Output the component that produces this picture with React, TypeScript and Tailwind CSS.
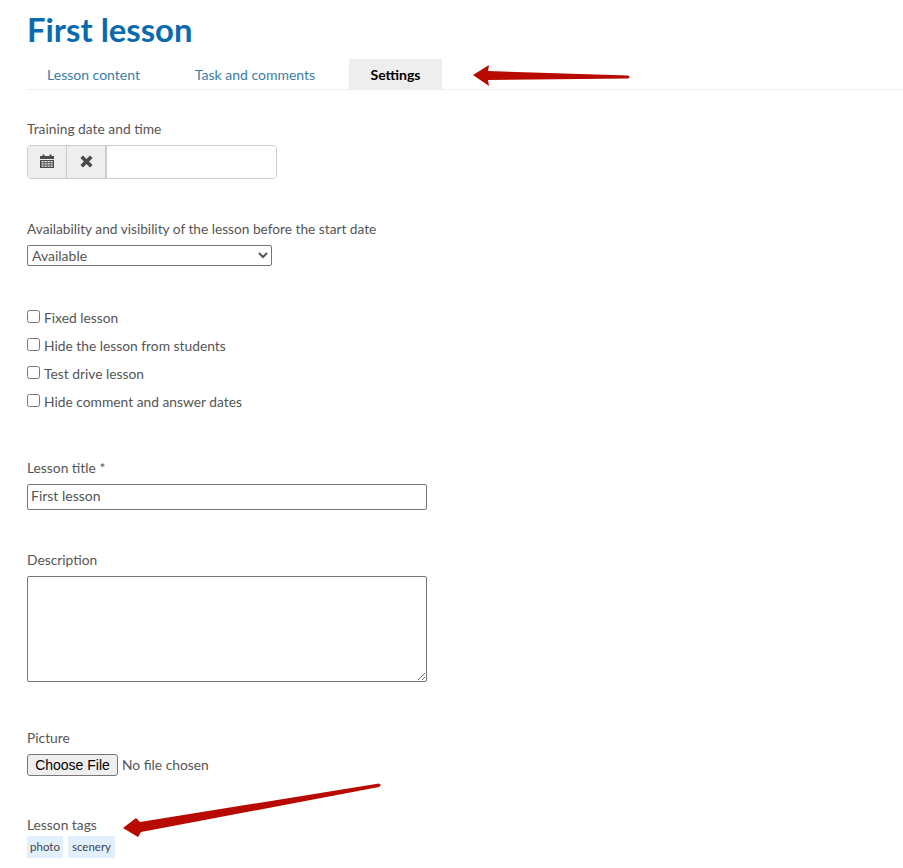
const checks = ["Fixed lesson", "Hide the lesson from students", "Test drive lesson", "Hide comment and answer dates"];

function Arrow({ className, viewBox, d }: { className: string; viewBox: string; d: string }) {
  return (
    <svg className={className} viewBox={viewBox} aria-hidden="true">
      <path d={d} fill="#b80a00" />
    </svg>
  );
}

export default function App() {
  return (
    <div className="relative h-[868px] overflow-hidden bg-white pl-[27px] font-['Lato',sans-serif] text-[13.8px] text-[#555]">
      <h1 className="pt-[10px] text-[32.8px] font-bold leading-[40px] text-[#0a6ab0]">First lesson</h1>

      {/* tabs */}
      <div className="mt-[9px] flex h-[31px] gap-[14px] border-b border-[#eeeeee] text-[14px]">
        <div className="flex h-[30px] w-[133px] items-center justify-center text-[#3a7ca8]">Lesson content</div>
        <div className="ml-px flex h-[30px] w-[160px] items-center justify-center text-[#3a7ca8]">Task and comments</div>
        <div className="flex h-[30px] w-[93px] items-center justify-center bg-[#eeeeee] font-bold text-black">Settings</div>
      </div>

      <label className="mt-[29px] block h-[20px] leading-[20px]">Training date and time</label>
      <div className="mt-[6px] flex h-[34px] w-[250px] overflow-hidden rounded-[4px] border border-[#cccccc]">
        <div className="flex w-[39px] items-center justify-center border-r border-[#cccccc] bg-[#eeeeee] pb-[2px]">
          <svg width="14" height="14" viewBox="0 0 14 14" aria-hidden="true">
            <path d="M0 2h2.5V.5h2V2h5V.5h2V2H14v3H0z" fill="#4a4a4a" />
            <path fillRule="evenodd" d="M0 6h14v8H0zm1.5 1v1.2h2.2V7zm3 0v1.2h2.2V7zm3 0v1.2h2.2V7zm3 0v1.2h2.2V7zm-9 2.3v1.2h2.2V9.300zm3 0v1.2h2.200V9.300zm3 0v1.2h2.200V9.300zm3 0v1.200h2.200V9.300zm-9 2.300v1.200h2.200v-1.200zm3 0v1.200h2.200v-1.200zm3 0v1.200h2.200v-1.200zm3 0v1.200h2.200v-1.200z" fill="#4a4a4a" />
          </svg>
        </div>
        <div className="flex w-[40px] items-center justify-center border-r-2 border-[#cccccc] bg-[#eeeeee] pb-[2px]">
          <svg width="13" height="13" viewBox="0 0 12 12" aria-hidden="true">
            <path d="M2.800.4 6 3.600 9.200.4l2.400 2.400L8.400 6l3.200 3.200-2.400 2.400L6 8.400l-3.200 3.200L.4 9.200 3.600 6 .4 2.800z" fill="#4a4a4a" />
          </svg>
        </div>
        <input className="min-w-0 flex-1 bg-white outline-none" />
      </div>

      <label className="mt-[40px] block h-[20px] leading-[20px] text-[13.7px]">Availability and visibility of the lesson before the start date</label>
      <select
        defaultValue="Available"
        className="mt-[6px] block h-[21px] w-[245px] appearance-auto rounded-[2px] border border-[#767676] bg-white pb-[2px] text-[14px] leading-[15px] text-[#555]"
      >
        <option>Available</option>
      </select>

      <div className="mt-[42px] flex flex-col gap-[8px]">
        {checks.map((c) => (
          <label key={c} className="flex h-[20px] items-center">
            <input type="checkbox" className="mb-[3px] mr-[4px] ml-0 h-[13px] w-[13px] appearance-auto" />
            <span className="leading-[20px]">{c}</span>
          </label>
        ))}
      </div>

      <label className="mt-[46px] block h-[20px] leading-[20px]">Lesson title *</label>
      <input
        defaultValue="First lesson"
        className="mt-[6px] block h-[26px] w-[400px] rounded-[2px] border border-[#767676] px-[3px] pb-[3px] text-[14px] text-[#555] outline-none"
      />

      <label className="mt-[40px] block h-[20px] leading-[20px]">Description</label>
      <textarea className="mt-[6px] block h-[106px] w-[400px] rounded-[2px] border border-[#767676] outline-none" />

      <label className="mt-[46px] block h-[20px] leading-[20px]">Picture</label>
      <div className="mt-[6px] flex h-[22px] items-center">
        <button className="h-[22px] w-[91px] rounded-[3px] border border-[#767676] bg-[#efefef] font-['Liberation_Sans',sans-serif] text-[14px] text-black">
          Choose File
        </button>
        <span className="ml-[4px]">No file chosen</span>
      </div>

      <label className="mt-[39px] block h-[20px] leading-[20px]">Lesson tags</label>
      <div className="mt-[1px] flex gap-[5px] text-[11.5px] text-[#444]">
        <span className="flex h-[22px] w-[36px] items-center justify-center bg-[#e1effe] pb-px">photo</span>
        <span className="flex h-[22px] w-[47px] items-center justify-center bg-[#e1effe] pb-px">scenery</span>
      </div>

      {/* red annotation arrows */}
      <Arrow
        className="absolute left-[470px] top-[62px] h-[28px] w-[165px]"
        viewBox="0 0 165 28"
        d="M3 13 L19 3 L18 9 L158 13.500 L160 15 L158 16.500 L18 18 L19 24 Z"
      />
      <Arrow
        className="absolute left-[120px] top-[780px] h-[60px] w-[265px]"
        viewBox="0 0 265 60"
        d="M3 48 L16 38 L20 42 L259 3.500 L261 5 L259 7 L21 52 L18 57 Z"
      />
    </div>
  );
}
